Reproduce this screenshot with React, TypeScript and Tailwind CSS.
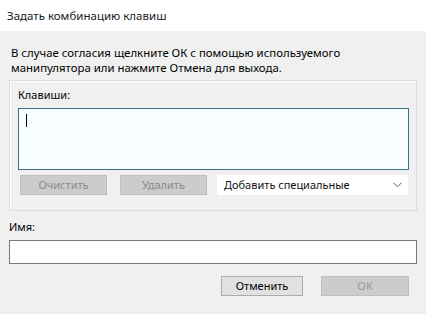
import React from "react";

export default function App() {
  const font = { fontFamily: '"Noto Sans", "Segoe UI", sans-serif' };
  return (
    <div className="w-[426px] h-[314px] bg-[#f0f0f0] text-[11px] text-black overflow-hidden flex flex-col" style={font}>
      <div className="h-[31px] bg-white flex items-center pl-[7px] text-[11.5px] text-[#1a1a1a] shrink-0">
        Задать комбинацию клавиш
      </div>
      <div className="px-[9px] flex flex-col">
        <div className="mt-[14px] pl-[2px] leading-[15px] text-[11.4px]">
          <div>В случае согласия щелкните ОК с помощью используемого</div>
          <div>манипулятора или нажмите Отмена для выхода.</div>
        </div>
        <div className="mt-[5px] w-[408px] h-[131px] border border-[#dcdcdc] shadow-[inset_1px_1px_0_#ffffff] flex flex-col pl-[8px] pr-[6px]">
          <div className="mt-[7px] leading-[14px]">Клавиши:</div>
          <div className="mt-[6px] w-[391px] h-[62px] border border-[#3d6f86] bg-[#f8fdff] relative">
            <div className="absolute left-[7px] top-[5px] w-px h-[13px] bg-black" />
          </div>
          <div className="mt-[5px] flex items-center h-[20px]">
            <div className="ml-[2px] w-[87px] h-[20px] bg-[#cccccc] border border-[#bfbfbf] text-[#8a8a8a] flex items-center justify-center">
              Очистить
            </div>
            <div className="ml-[13px] w-[87px] h-[20px] bg-[#cccccc] border border-[#bfbfbf] text-[#8a8a8a] flex items-center justify-center">
              Удалить
            </div>
            <div className="ml-[10px] w-[191px] h-[20px] bg-white flex items-center justify-between pl-[7px] pr-[5px] text-[#111]">
              <span>Добавить специальные</span>
              <svg width="9" height="6" viewBox="0 0 9 6" className="mr-[1px]">
                <path d="M0.5 0.8 L4.5 4.8 L8.5 0.8" fill="none" stroke="#555" strokeWidth="1" />
              </svg>
            </div>
          </div>
        </div>
        <div className="mt-[9px] leading-[14px]">Имя:</div>
        <div className="mt-[6px] w-[408px] h-[24px] border border-[#7a7a7a] bg-white" />
        <div className="mt-[12px] flex justify-end pr-[8px]">
          <div className="w-[82px] h-[20px] bg-[#e1e1e1] border border-[#adadad] flex items-center justify-center">
            Отменить
          </div>
          <div className="ml-[18px] w-[88px] h-[20px] bg-[#cccccc] border border-[#bfbfbf] text-[#9a9a9a] flex items-center justify-center">
            OK
          </div>
        </div>
      </div>
    </div>
  );
}
